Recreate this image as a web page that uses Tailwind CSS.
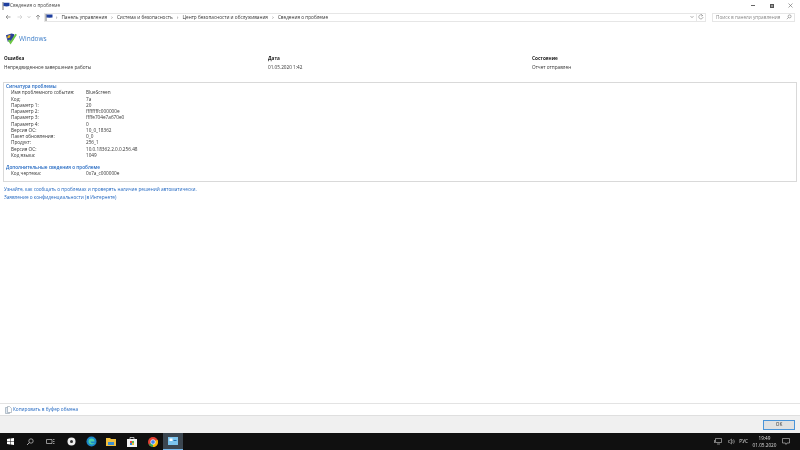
<!DOCTYPE html>
<html lang="ru">
<head>
  <meta charset="UTF-8" />
  <title>Сведения о проблеме</title>
  <script src="https://cdn.jsdelivr.net/npm/@tailwindcss/browser@4"></script>
</head>
<body class="w-[800px] h-[450px] overflow-hidden bg-white flex flex-col blur-[0.3px] font-['Open_Sans','Noto_Sans',sans-serif] text-[4.7px] leading-[6.25px] text-[#333]">

  <!-- title bar -->
  <div class="h-[11px] flex items-center pl-[2px] shrink-0">
    <svg width="8" height="8" viewBox="0 0 8 8"><path d="M1 0v8" stroke="#555" stroke-width=".8"/><path d="M1.5 .7h6v3.4l-3 .3-3-.3z" fill="#1f3f9e"/></svg>
    <span class="text-[#444]">Сведения о проблеме</span>
    <div class="ml-auto flex items-center">
      <div class="w-[19px] flex justify-center"><div class="w-[4px] h-[.6px] bg-[#666]"></div></div>
      <div class="w-[19px] flex justify-center"><div class="w-[4px] h-[4px] border border-[#555] bg-[#999]"></div></div>
      <div class="w-[19px] flex justify-center">
        <svg width="5" height="5" viewBox="0 0 5 5"><path d="M.5.5l4 4M4.5.5l-4 4" stroke="#666" stroke-width=".6"/></svg>
      </div>
    </div>
  </div>

  <!-- address bar -->
  <div class="h-[12px] flex items-center shrink-0 pl-[5px] pr-[5px]">
    <svg width="6" height="6" viewBox="0 0 6 6"><path d="M5.500 3H1M3 1L1 3l2 2" fill="none" stroke="#777" stroke-width=".7"/></svg>
    <svg class="ml-[6px]" width="6" height="6" viewBox="0 0 6 6"><path d="M.5 3H5M3 1l2 2-2 2" fill="none" stroke="#ccc" stroke-width=".7"/></svg>
    <svg class="ml-[4px]" width="4" height="4" viewBox="0 0 4 4"><path d="M.8 1.400L2 2.600l1.200-1.200" fill="none" stroke="#999" stroke-width=".6"/></svg>
    <svg class="ml-[4px]" width="6" height="6" viewBox="0 0 6 6"><path d="M3 5.500V1M1 3l2-2 2 2" fill="none" stroke="#777" stroke-width=".7"/></svg>
    <div class="ml-[3px] w-[662px] h-[9px] border border-[#e6e6e6] flex items-center">
      <svg width="8" height="7" viewBox="0 0 8 7"><path d="M1 0v7" stroke="#555" stroke-width=".8"/><path d="M1.500 .5h6v3l-3 .3-3-.3z" fill="#1f3f9e"/></svg>
      <span class="ml-[3px] text-[#555]">›</span>
      <span class="ml-[4px]">Панель управления</span>
      <span class="ml-[4.250px] text-[#555]">›</span>
      <span class="ml-[4.250px]">Система и безопасность</span>
      <span class="ml-[4.250px] text-[#555]">›</span>
      <span class="ml-[4.250px]">Центр безопасности и обслуживания</span>
      <span class="ml-[4.250px] text-[#555]">›</span>
      <span class="ml-[4.250px]">Сведения о проблеме</span>
      <svg class="ml-auto mr-[2px]" width="4" height="4" viewBox="0 0 4 4"><path d="M.6 1.200L2 2.600l1.400-1.400" fill="none" stroke="#666" stroke-width=".6"/></svg>
      <div class="w-px h-[7px] bg-[#e6e6e6]"></div>
      <svg class="mx-[1px]" width="6" height="6" viewBox="0 0 6 6"><path d="M4.600 1.600A2.100 2.100 0 1 0 5 3M3.400.4l1.200 1.200-1.400.6" fill="none" stroke="#666" stroke-width=".5"/></svg>
    </div>
    <div class="ml-auto w-[83px] h-[9px] border border-[#e6e6e6] flex items-center pl-[3px] pr-[2px] text-[#888]">
      Поиск в панели управления
      <svg class="ml-auto" width="6" height="6" viewBox="0 0 6 6"><circle cx="3.600" cy="2.400" r="1.500" fill="none" stroke="#777" stroke-width=".6"/><path d="M2.500 3.500L.8 5.200" stroke="#777" stroke-width=".6"/></svg>
    </div>
  </div>

  <!-- main content -->
  <div class="flex-1 flex flex-col px-[3px] min-h-0">
    <div class="flex items-center h-[15px] mt-[8.5px] pl-[2px]">
      <svg width="13" height="14" viewBox="0 0 14 14">
        <path d="M1 3l6-2 3 1-1 6-6 2z" fill="#2a3f9a"/>
        <path d="M3 3.500l3-1-.6 3-3 1z" fill="#e8b61c"/>
        <path d="M4 8l2 3 6-9" fill="none" stroke="#6cc644" stroke-width="2"/>
      </svg>
      <span class="ml-[1px] text-[6.5px] text-[#3f7fc9]">Windows</span>
    </div>

    <div class="mt-[8.5px] grid grid-cols-[264px_264px_1fr] pl-[1px] h-[27px]">
      <div>
        <div class="font-bold text-[#222]">Ошибка</div>
        <div class="mt-[2.75px]">Непредвиденное завершение работы</div>
      </div>
      <div>
        <div class="font-bold text-[#222]">Дата</div>
        <div class="mt-[2.75px]">01.05.2020 1:42</div>
      </div>
      <div>
        <div class="font-bold text-[#222]">Состояние</div>
        <div class="mt-[2.75px]">Отчет отправлен</div>
      </div>
    </div>

    <!-- details box -->
    <div class="w-[794px] h-[100px] border border-[#d9d9d9] pl-[2px]">
      <div class="font-semibold text-[#1f66c1]">Сигнатура проблемы</div>
      <div class="grid grid-cols-[75px_1fr] pl-[5px]">
        <div>Имя проблемного события:</div><div>BlueScreen</div>
        <div>Код:</div><div>7a</div>
        <div>Параметр 1:</div><div>20</div>
        <div>Параметр 2:</div><div>ffffffffc000000e</div>
        <div>Параметр 3:</div><div>ffffe704e7a670e0</div>
        <div>Параметр 4:</div><div>0</div>
        <div>Версия ОС:</div><div>10_0_18362</div>
        <div>Пакет обновления:</div><div>0_0</div>
        <div>Продукт:</div><div>256_1</div>
        <div>Версия ОС:</div><div>10.0.18362.2.0.0.256.48</div>
        <div>Код языка:</div><div>1049</div>
      </div>
      <div class="mt-[6px] font-semibold text-[#1f66c1]">Дополнительные сведения о проблеме</div>
      <div class="grid grid-cols-[75px_1fr] pl-[5px]">
        <div>Код чертежа:</div><div>0x7a_c000000e</div>
      </div>
    </div>

    <a class="mt-[3.500px] pl-[1px] text-[#1f66c1]" href="#">Узнайте, как сообщать о проблемах и проверять наличие решений автоматически.</a>
    <a class="mt-[2.500px] pl-[1px] text-[#1f66c1]" href="#">Заявление о конфиденциальности (в Интернете)</a>
  </div>

  <!-- footer -->
  <div class="h-[12px] border-t border-[#e3e3e3] flex items-center pl-[5px] shrink-0">
    <svg width="7" height="8" viewBox="0 0 7 8"><path d="M.5 1.500h4v6h-4z" fill="#dfe8f2" stroke="#7a8a9a" stroke-width=".5"/><path d="M2.500.5h2l2 2v4h-4z" fill="#fff" stroke="#7a8a9a" stroke-width=".5"/></svg>
    <span class="ml-[1px] text-[#1f66c1]">Копировать в буфер обмена</span>
  </div>
  <div class="h-[18px] bg-[#f0f0f0] border-t border-[#dfdfdf] flex items-center justify-end pr-[5px] shrink-0">
    <button class="w-[32px] h-[10px] bg-[#e1e1e1] border border-[#4a94d8] text-[#333] text-[4.7px] leading-none">OK</button>
  </div>

  <!-- taskbar -->
  <div class="h-[17px] bg-[#101010] flex items-center shrink-0 text-[#ddd]">
    <div class="w-[20px] flex justify-center">
      <svg width="7" height="7" viewBox="0 0 7 7" fill="#fff"><path d="M0 1l3-.4V3.300H0zM3.500.5L7 0v3.300H3.500zM0 3.700h3v2.700L0 6zM3.500 3.700H7V7l-3.500-.5z"/></svg>
    </div>
    <div class="w-[20px] flex justify-center">
      <svg width="8" height="8" viewBox="0 0 8 8"><circle cx="5" cy="3" r="2.200" fill="none" stroke="#ccc" stroke-width=".7"/><path d="M3.400 4.600L1 7" stroke="#ccc" stroke-width=".8"/></svg>
    </div>
    <div class="w-[20px] flex justify-center">
      <svg width="9" height="7" viewBox="0 0 9 7"><path d="M.5 1.500h5.500v4H.5z" fill="none" stroke="#ccc" stroke-width=".7"/><path d="M7 1.500h1.500M7 3.500h1.500M7 5.500h1.500" stroke="#ccc" stroke-width=".7"/></svg>
    </div>
    <div class="w-[20px] ml-[1px] flex justify-center">
      <svg width="9" height="9" viewBox="0 0 9 9"><circle cx="4.500" cy="4.500" r="4" fill="#eee"/><circle cx="4.500" cy="4.500" r="1.500" fill="#333"/></svg>
    </div>
    <div class="w-[20px] flex justify-center">
      <svg width="11" height="11" viewBox="0 0 11 11"><circle cx="5.500" cy="5.500" r="5" fill="#1b87c9"/><path d="M2.500 5.500a3 3 0 0 1 6 0H4.500c0 1.800 2.500 2.300 4.500 1.300-1 2.500-6.500 2.500-6.500-1.300z" fill="#4fd1a5"/></svg>
    </div>
    <div class="w-[20px] flex justify-center">
      <svg width="10" height="9" viewBox="0 0 10 9"><path d="M0 1h4l1 1h5v7H0z" fill="#f0c040"/><path d="M2 5h6v3H2z" fill="#3d8fd1"/></svg>
    </div>
    <div class="w-[20px] ml-[1px] flex justify-center">
      <svg width="10" height="11" viewBox="0 0 10 11"><path d="M3 3V1.500h4V3" fill="none" stroke="#eee" stroke-width=".7"/><path d="M0 3h10v8H0z" fill="#f4f4f4"/><path d="M3 5h2v2H3z" fill="#e44"/><path d="M5 5h2v2H5z" fill="#5b5"/><path d="M3 7h2v2H3z" fill="#38d"/><path d="M5 7h2v2H5z" fill="#eb3"/></svg>
    </div>
    <div class="w-[20px] ml-[0.500px] flex justify-center">
      <svg width="10" height="10" viewBox="0 0 10 10"><circle cx="5" cy="5" r="5" fill="#e34133"/><path d="M5 5L.7 7.500A5 5 0 0 0 5 10z" fill="#34a853"/><path d="M5 5v5a5 5 0 0 0 4.500-7.200z" fill="#fbbc05"/><circle cx="5" cy="5" r="2.300" fill="#4285f4" stroke="#fff" stroke-width=".7"/></svg>
    </div>
    <div class="w-[20px] ml-[0.500px] h-full bg-[#3b4650] border-b border-[#76b9ed] flex justify-center items-center">
      <svg width="10" height="8" viewBox="0 0 10 8"><path d="M0 0h10v8H0z" fill="#7cc4ee"/><path d="M1.500 1.500h3v2.500h-3z" fill="#fff"/><path d="M5.500 3h3v1h-3z" fill="#1f6fb0"/></svg>
    </div>

    <div class="ml-auto flex items-center">
      <svg width="8" height="7" viewBox="0 0 8 7"><path d="M1.500.5h6v4h-6zM3 6h3M.5 2v3" fill="none" stroke="#ccc" stroke-width=".6"/></svg>
      <svg class="ml-[6px]" width="7" height="7" viewBox="0 0 7 7"><path d="M.5 2.500h1.200L3.500 1v5L1.700 4.500H.5z" fill="none" stroke="#ccc" stroke-width=".5"/><path d="M4.500 2.200a2 2 0 0 1 0 2.600M5.500 1.300a3.200 3.200 0 0 1 0 4.400" fill="none" stroke="#ccc" stroke-width=".5"/></svg>
      <span class="ml-[4px]">РУС</span>
      <div class="ml-[4px] w-[25px] text-center leading-[7px]">19:49<br>01.05.2020</div>
      <svg class="ml-[5px] mr-[10px]" width="8" height="7" viewBox="0 0 8 7"><path d="M.5.500h7v4.500H5L4 6.500 3.500 5h-3z" fill="none" stroke="#ccc" stroke-width=".6"/></svg>
    </div>
  </div>
</body>
</html>
